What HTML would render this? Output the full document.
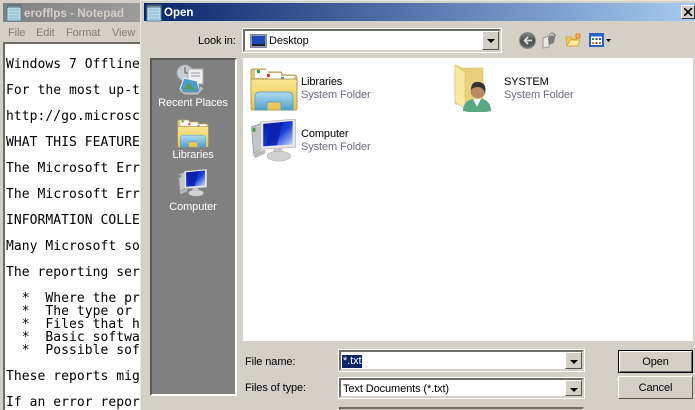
<!DOCTYPE html>
<html><head><meta charset="utf-8">
<style>
html,body{margin:0;padding:0;width:695px;height:410px;overflow:hidden;background:#d4d0c8}
div,span,svg{position:absolute;box-sizing:border-box}
#root{left:0;top:0;width:695px;height:410px;overflow:hidden;contain:paint}
.t{font-family:"Liberation Sans",sans-serif;font-size:11px;letter-spacing:-.1px;line-height:14px;white-space:nowrap;color:#000}
.m{font-family:"DejaVu Sans Mono","Liberation Mono",monospace;font-size:13px;letter-spacing:.05px;line-height:13px;white-space:pre;color:#000;left:6px}
.sunk{border:2px solid;border-color:#6e6c66 #d4d0c8 #d4d0c8 #6e6c66;background:#fff;outline:1px solid #fff;outline-offset:0}
.arrow{width:17px;background:#d4d0c8;border:1px solid;border-color:#fff #555 #555 #fff;top:0;bottom:0;right:0}
.arrow:after{content:"";position:absolute;left:4px;top:7px;border:4px solid transparent;border-top:4px solid #000;border-bottom:0}
.btn{background:#d4d0c8;text-align:center;left:618px;width:75px}
</style></head><body>
<div id="root">
<svg width="0" height="0" style="position:absolute"><defs>
<linearGradient id="fo" x1="0" y1="0" x2="0" y2="1"><stop offset="0" stop-color="#f9e690"/><stop offset="1" stop-color="#e8c252"/></linearGradient>
<linearGradient id="bl" x1="0" y1="0" x2="0" y2="1"><stop offset="0" stop-color="#b4ddf2"/><stop offset="1" stop-color="#4e9fca"/></linearGradient>
<linearGradient id="sc" x1="0" y1="0" x2="1" y2="1"><stop offset="0" stop-color="#00169a"/><stop offset=".55" stop-color="#1a3ed8"/><stop offset="1" stop-color="#cfe0fa"/></linearGradient>
<linearGradient id="bk" x1="0" y1="0" x2="0" y2="1"><stop offset="0" stop-color="#8a8a8a"/><stop offset=".5" stop-color="#4a4a4a"/><stop offset="1" stop-color="#6a6a6a"/></linearGradient>
<symbol id="lib" viewBox="0 0 48 46">
<path d="M1 12V6q0-2 2-2h12l2 3h14l2 3h11q3 0 3 3v6H1z" fill="#e0c878" stroke="#b89c58"/>
<rect x="5" y="5" width="13" height="8" fill="#fff"/><rect x="18" y="8" width="13" height="7" fill="#fff"/><rect x="31" y="11" width="13" height="6" fill="#fff"/>
<rect x="7" y="5" width="3" height="3" fill="#29a33a"/><rect x="17" y="9" width="3" height="3" fill="#d63b22"/><rect x="31" y="12" width="3" height="3" fill="#2a8ad4"/>
<path d="M1 14H46q1 0 1 2V43q0 2-2 2H3q-2 0-2-2z" fill="url(#fo)" stroke="#b89c58"/>
<path d="M5 45V32q0-5 5-5H38q5 0 5 5V45H31V39q0-2-2-2H19q-2 0-2 2v6z" fill="url(#bl)" stroke="#4f97bd" stroke-width=".7"/>
</symbol>
<symbol id="comp" viewBox="0 0 48 44">
<path d="M1 8L10 5V32L3 35z" fill="#c4c6c6" stroke="#8c8c8c" stroke-width=".7"/>
<rect x="2" y="9" width="3" height="4" fill="#44a03c"/>
<path d="M10 3L46 0V29L10 31z" fill="#e6e6e6" stroke="#b2b2b2" stroke-width=".7"/>
<path d="M13 5L43 2V26L13 28z" fill="url(#sc)"/>
<path d="M20 5L33 3 27 27H16z" fill="#0a1cab" opacity=".75"/>
<path d="M2 36L15 31V35L5 40z" fill="#b8b8b8"/>
<path d="M24 30H32L34 35H22z" fill="#c8c8c8"/>
<ellipse cx="29" cy="38" rx="12" ry="5" fill="#d2d2d2" stroke="#b5b5b5" stroke-width=".7"/>
</symbol>
<symbol id="pad" viewBox="0 0 16 18">
<rect x="1" y="2" width="14" height="15" fill="#b9dbe6" stroke="#56899e"/>
<path d="M3 6H13M3 9H13M3 12H13M3 15H13" stroke="#84b6c8"/>
<path d="M2 0V4M4 0V4M6 0V4M8 0V4M10 0V4M12 0V4M14 0V4" stroke="#58646a"/>
</symbol>
</defs></svg>

<!-- Notepad -->
<div style="left:0;top:0;width:141px;height:410px;background:#d4d0c8"></div>
<div style="left:3px;top:3px;width:138px;height:19px;background:linear-gradient(90deg,#808080,#9c9c9c)"></div>
<svg style="left:6px;top:4px" width="16" height="18"><use href="#pad" width="16" height="18"/></svg>
<div class="t" style="left:24px;top:6px;font-weight:bold;font-size:11.7px;letter-spacing:0;color:#d4d0c8;line-height:16px">erofflps - Notepad</div>
<div class="t" style="left:8px;top:26px;color:#7f7d78">File</div>
<div class="t" style="left:36px;top:26px;color:#7f7d78">Edit</div>
<div class="t" style="left:66px;top:26px;color:#7f7d78">Format</div>
<div class="t" style="left:112px;top:26px;color:#7f7d78">View</div>
<div style="left:3px;top:42px;width:138px;height:368px;background:#fff;border-left:2px solid #6e6c66;border-top:2px solid #6e6c66"></div>
<div class="m" style="top:58px">Windows 7 Offline</div>
<div class="m" style="top:84px">For the most up-t</div>
<div class="m" style="top:110px">http://go.microsc</div>
<div class="m" style="top:136px">WHAT THIS FEATURE</div>
<div class="m" style="top:162px">The Microsoft Err</div>
<div class="m" style="top:188px">The Microsoft Err</div>
<div class="m" style="top:214px">INFORMATION COLLE</div>
<div class="m" style="top:240px">Many Microsoft so</div>
<div class="m" style="top:266px">The reporting ser</div>
<div class="m" style="top:292px">  *  Where the pr</div>
<div class="m" style="top:305px">  *  The type or </div>
<div class="m" style="top:318px">  *  Files that h</div>
<div class="m" style="top:331px">  *  Basic softwa</div>
<div class="m" style="top:344px">  *  Possible sof</div>
<div class="m" style="top:370px">These reports mig</div>
<div class="m" style="top:396px">If an error repor</div>

<!-- Dialog -->
<div style="left:140px;top:0;width:555px;height:410px;background:#d4d0c8;border-left:1px solid #e8e6e0;border-top:1px solid #e8e6e0"></div>
<div style="left:144px;top:3px;width:551px;height:18px;background:linear-gradient(90deg,#0a246a,#a6caf0)"></div>
<svg style="left:146px;top:4px" width="16" height="18"><use href="#pad" width="16" height="18"/></svg>
<div class="t" style="left:164px;top:5px;font-weight:bold;font-size:11.5px;letter-spacing:0;color:#fff;line-height:16px">Open</div>
<div style="left:681px;top:5px;width:14px;height:14px;background:#d4d0c8;border:1px solid;border-color:#fff #333 #333 #fff"></div>
<svg style="left:684px;top:8px" width="9" height="8"><path d="M0 0L8 8M8 0L0 8" stroke="#000" stroke-width="1.6"/></svg>

<div class="t" style="left:198px;top:34px">Look in:</div>
<div class="sunk" style="left:243px;top:29px;width:258px;height:23px">
  <svg style="left:5px;top:3px" width="17" height="14"><rect x=".5" y=".5" width="16" height="13" fill="#8c98ac" stroke="#7f8da0"/><rect x="2" y="2" width="13" height="8" fill="#1c48b8"/><rect x="2" y="10" width="13" height="2" fill="#222"/></svg>
  <div class="t" style="left:24px;top:3px">Desktop</div>
  <div class="arrow"></div>
</div>

<!-- Toolbar -->
<svg style="left:519px;top:32px" width="18" height="18"><circle cx="8.500" cy="8.500" r="8" fill="url(#bk)" stroke="#8a8a8a"/><path d="M13 8.500H6M9 5L5.500 8.500 9 12" stroke="#ddd" stroke-width="1.8" fill="none"/></svg>
<svg style="left:542px;top:31px" width="16" height="18"><path d="M1 7L7 5V16L1 17z" fill="#e8e8e8" stroke="#999"/><path d="M6 8L7 4 10 1 14 4 13 6 12 12 7 14z" fill="#7d7d7d"/><path d="M8 5L10 3 12 5" stroke="#ddd" fill="none"/></svg>
<svg style="left:565px;top:32px" width="17" height="16"><path d="M1 5H6L7 7H13V13H2z" fill="#eccb5c" stroke="#d3a63a"/><path d="M2 14L5 8H15L13 14z" fill="#fbe9a0" stroke="#d3a63a"/><circle cx="13" cy="4" r="3" fill="#f47a3a"/><path d="M13 0V8M9 4H16" stroke="#f7c060"/></svg>
<svg style="left:589px;top:33px" width="22" height="15"><rect x="1" y="1" width="13" height="12" fill="#fff" stroke="#2a62c4" stroke-width="2"/><rect x="1" y="1" width="14" height="2.500" fill="#2a62c4"/><path d="M3 5h2v2H3z" fill="#2a8a4a"/><path d="M6.500 5h2v2h-2z" fill="#446"/><path d="M10 5h2v2h-2z" fill="#2a62c4"/><path d="M3 9h2v2H3z" fill="#e08030"/><path d="M6.500 9h2v2h-2z" fill="#c03030"/><path d="M10 9h2v2h-2z" fill="#888"/><path d="M17 6h5l-2.500 3z" fill="#000"/></svg>

<!-- Places -->
<div style="left:150px;top:58px;width:87px;height:338px;background:#808080;border:2px solid;border-color:#5a5a58 #fff #fff #5a5a58"></div>
<svg style="left:176px;top:64px" width="30" height="32" viewBox="0 0 30 32">
<circle cx="9" cy="9" r="8" fill="#c6ccd4" stroke="#9ca2aa"/><path d="M9 3V9H14" stroke="#555" fill="none"/>
<rect x="12" y="5" width="15" height="15" fill="#eee" stroke="#aaa"/><path d="M15 9H24M15 12H24" stroke="#99a"/>
<path d="M4 25L8 14 21 17 24 28 10 30z" fill="#4aa0c8" stroke="#eee"/><path d="M7 25L13 19 20 26z" fill="#5a9a5a"/>
<path d="M1 26L9 31H22L28 24 24 22 22 28H10z" fill="#bcbcbc" stroke="#707070" stroke-width=".5"/>
</svg>
<div class="t" style="left:151px;top:96px;width:84px;text-align:center;color:#fff">Recent Places</div>
<svg style="left:177px;top:117px" width="32" height="31"><use href="#lib" width="32" height="31"/></svg>
<div class="t" style="left:151px;top:148px;width:84px;text-align:center;color:#fff">Libraries</div>
<svg style="left:178px;top:169px" width="30" height="28"><use href="#comp" width="30" height="28"/></svg>
<div class="t" style="left:151px;top:200px;width:84px;text-align:center;color:#fff">Computer</div>

<!-- List -->
<div style="left:243px;top:58px;width:450px;height:283px;background:#fff"></div>
<svg style="left:250px;top:65px" width="48" height="46"><use href="#lib" width="48" height="46"/></svg>
<div class="t" style="left:301px;top:75px">Libraries</div>
<div class="t" style="left:301px;top:88px;color:#6d6d7d">System Folder</div>

<svg style="left:454px;top:64px" width="42" height="48" viewBox="0 0 42 48">
<path d="M1 1L8 4H29V41H12L1 40z" fill="#e9d07a" stroke="#d8bc68" stroke-width=".6"/>
<path d="M1 1L11 8V45L1 38z" fill="#fae9a0" stroke="#d8bc68" stroke-width=".6"/>
<path d="M9 47Q9 38 18 35H29Q37 38 37 47Q23 50 9 47z" fill="#5aa784"/>
<path d="M19 35L23 43 27 35z" fill="#f3f3f3"/>
<circle cx="24" cy="27" r="7.500" fill="#b98c66"/>
<path d="M17 26Q17 17 25 18Q33 19 31 29Q29 23 24 23Q19 23 17 26z" fill="#333"/>
</svg>
<div class="t" style="left:504px;top:75px">SYSTEM</div>
<div class="t" style="left:504px;top:88px;color:#6d6d7d">System Folder</div>

<svg style="left:250px;top:119px" width="48" height="43"><use href="#comp" width="48" height="43"/></svg>
<div class="t" style="left:301px;top:127px">Computer</div>
<div class="t" style="left:301px;top:140px;color:#6d6d7d">System Folder</div>

<!-- Bottom -->
<div class="t" style="left:245px;top:355px">File name:</div>
<div class="t" style="left:245px;top:381px">Files of type:</div>
<div class="sunk" style="left:339px;top:350px;width:245px;height:21px">
  <div class="t" style="left:1px;top:3px;width:20px;height:13px;background:#0a246a;color:#fff;line-height:13px;padding-left:1px">*.txt</div>
  <div class="arrow"></div>
</div>
<div class="sunk" style="left:339px;top:378px;width:245px;height:20px">
  <div class="t" style="left:2px;top:2px">Text Documents (*.txt)</div>
  <div class="arrow"></div>
</div>
<div class="sunk" style="left:339px;top:407px;width:245px;height:3px;overflow:hidden;outline:0"><div class="arrow" style="height:20px;bottom:auto"></div></div>

<div class="btn t" style="top:350px;height:23px;border:1px solid #000;box-shadow:inset 1px 1px 0 #fff,inset -1px -1px 0 #666;line-height:22px">Open</div>
<div class="btn t" style="top:376px;height:23px;border:1px solid;border-color:#fff #555 #555 #fff;line-height:22px">Cancel</div>
</div>
</body></html>
